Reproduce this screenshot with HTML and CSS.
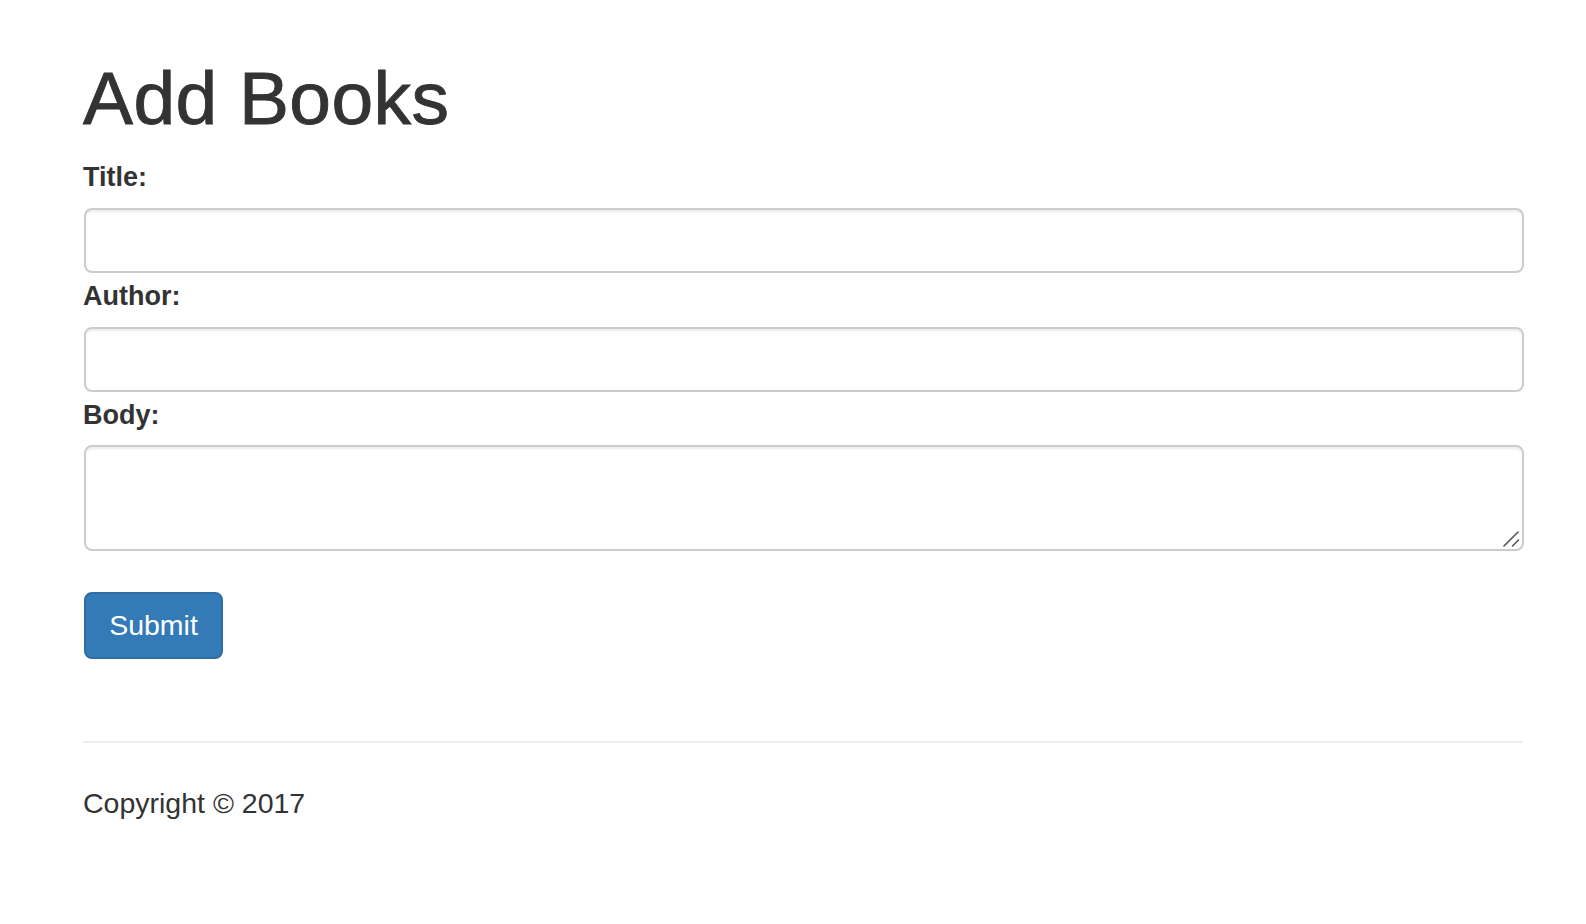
FILE: index.html
```html
<!DOCTYPE html>
<html lang="en">
<head>
<meta charset="utf-8">
<title>Add Books</title>
<link rel="stylesheet" href="styles.css">
</head>
<body>
<div class="container">
  <h1 class="page-title">Add Books</h1>
  <form class="book-form">
    <label class="field-label" for="title">Title:</label>
    <input class="field-input" id="title" type="text">
    <label class="field-label" for="author">Author:</label>
    <input class="field-input" id="author" type="text">
    <label class="field-label" for="body">Body:</label>
    <div class="textarea-wrap">
      <textarea class="field-input field-textarea" id="body"></textarea>
      <svg class="grip" width="18" height="18" viewBox="0 0 18 18" aria-hidden="true">
        <line x1="1" y1="16" x2="15" y2="2" stroke="#555" stroke-width="1.6" stroke-linecap="round"/>
        <line x1="9.5" y1="16" x2="15.5" y2="10" stroke="#555" stroke-width="1.6" stroke-linecap="round"/>
      </svg>
    </div>
    <button class="btn-submit" type="submit">Submit</button>
  </form>
  <hr class="divider">
  <footer class="footer">
    <p class="copyright">Copyright &copy; 2017</p>
  </footer>
</div>
</body>
</html>
```

FILE: styles.css
```css
* { box-sizing: border-box; }

html, body {
  margin: 0;
  padding: 0;
  background: #fff;
}

body {
  font-family: "Liberation Sans", Arial, Helvetica, sans-serif;
  font-size: 28px;
  color: #333;
}

.container {
  width: 1440px;
  margin-left: 83px;
  padding-top: 57px;
}

.page-title {
  margin: 0 0 15px 0;
  font-size: 75px;
  line-height: 82px;
  font-weight: 400;
  letter-spacing: 0.4px;
  color: #333;
  -webkit-text-stroke: 0.9px #333;
}

.book-form {
  display: flex;
  flex-direction: column;
  align-items: flex-start;
}

.field-label {
  display: block;
  font-weight: 700;
  font-size: 27px;
  line-height: 47px;
  margin-bottom: 7px;
}

.field-input {
  display: block;
  width: 1440px;
  height: 65px;
  margin: 0 0 0 1px;
  padding: 12px 24px;
  font-family: inherit;
  font-size: 28px;
  color: #555;
  background: #fff;
  border: 2px solid #ccc;
  border-radius: 8px;
  box-shadow: inset 0 2px 2px rgba(0, 0, 0, 0.075);
  outline: none;
}

.textarea-wrap {
  position: relative;
  margin-top: -1px;
}

.field-textarea {
  height: 106px;
  resize: none;
}

.grip {
  position: absolute;
  right: 3px;
  bottom: 3px;
}

.btn-submit {
  margin: 41px 0 0 1px;
  width: 139px;
  height: 67px;
  padding: 0;
  font-family: inherit;
  font-size: 28.5px;
  color: #fff;
  background: #337ab7;
  border: 2px solid #2e6da4;
  border-radius: 8px;
  cursor: pointer;
}

.divider {
  margin: 82px 0 0 0;
  border: 0;
  border-top: 2px solid #eee;
  height: 0;
}

.footer {
  padding-top: 40px;
}

.copyright {
  margin: 0;
  font-size: 28.5px;
  line-height: 40px;
}
```
